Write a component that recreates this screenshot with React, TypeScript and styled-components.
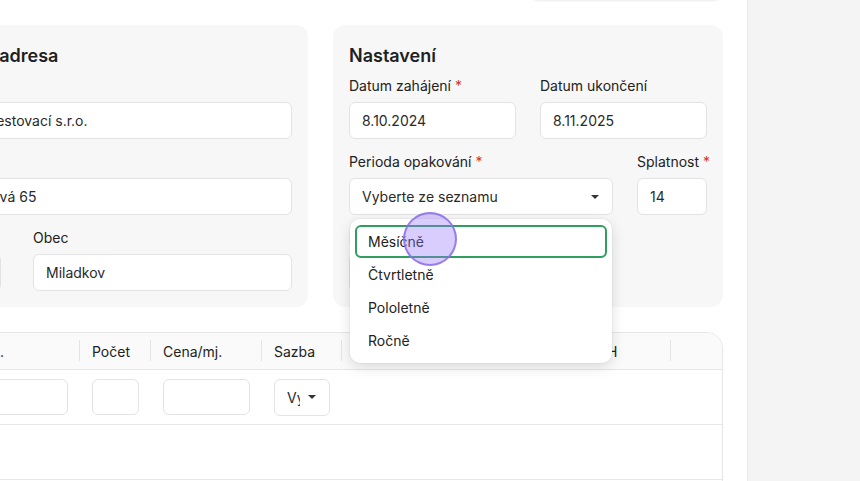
import React from "react";
import styled, { createGlobalStyle } from "styled-components";

const Global = createGlobalStyle`
  html, body { margin: 0; padding: 0; background: #ffffff; }
  body {
    font-family: Inter, "Noto Sans", "Liberation Sans", sans-serif;
    color: #222222;
    -webkit-font-smoothing: antialiased;
  }
  * { box-sizing: border-box; }
`;

const Shell = styled.div`
  display: flex;
  width: 100vw;
  height: 100vh;
  overflow: hidden;
`;

const Main = styled.main`
  flex: 1;
  min-width: 0;
  padding-right: 24px;
  display: flex;
  flex-direction: column;
`;

const Content = styled.div`
  margin-left: -82px;
  display: flex;
  flex-direction: column;
  gap: 25px;
`;

const Toolbar = styled.div`
  margin-top: -40px;
  height: 40px;
  display: flex;
  justify-content: flex-end;
`;

const ToolButton = styled.button`
  width: 192px;
  height: 40px;
  margin-right: 1px;
  background: #ffffff;
  border: 1px solid #e6e6e6;
  border-radius: 8px;
  box-shadow: 0 1px 2px rgba(0, 0, 0, 0.08);
  font: 500 14px Inter, sans-serif;
  color: #222;
`;

const Sidebar = styled.aside`
  width: 113px;
  flex-shrink: 0;
  background: #f4f4f4;
  border-left: 1px solid #ebebeb;
`;

const Cards = styled.div`
  display: grid;
  grid-template-columns: 1fr 1fr;
  gap: 25px;
`;

const Card = styled.section`
  background: #f7f7f7;
  border-radius: 12px;
  padding: 19px 16px 16px;
  display: flex;
  flex-direction: column;
`;

const CardTitle = styled.h2`
  margin: 0 0 8px;
  font-size: 18px;
  line-height: 24px;
  font-weight: 600;
  color: #1f1f1f;
  white-space: nowrap;
`;

const Row = styled.div<{ $cols: string; $gap?: number }>`
  display: grid;
  grid-template-columns: ${(p) => p.$cols};
  column-gap: ${(p) => p.$gap ?? 24}px;
  & + & {
    margin-top: 13px;
  }
`;

const Field = styled.div`
  display: flex;
  flex-direction: column;
  min-width: 0;
  position: relative;
`;

const Label = styled.label`
  font-size: 14px;
  line-height: 20px;
  margin-bottom: 6px;
  color: #222;
  white-space: nowrap;
`;

const Req = styled.span`
  color: #d0392b;
`;

const TextInput = styled.input`
  height: 37px;
  width: 100%;
  border: 1px solid #e3e3e3;
  border-radius: 6px;
  background: #ffffff;
  padding: 0 12px;
  font: 400 14px Inter, sans-serif;
  color: #2a2a2a;
  outline: none;
`;

const SelectBox = styled.div<{ $h?: number }>`
  height: ${(p) => p.$h ?? 37}px;
  width: 100%;
  border: 1px solid #e3e3e3;
  border-radius: 6px;
  background: #ffffff;
  display: flex;
  align-items: center;
  gap: 8px;
  padding: 0 13px 0 12px;
  font-size: 14px;
  color: #2a2a2a;
`;

const SelectValue = styled.span`
  flex: 1;
  min-width: 0;
  overflow: hidden;
  white-space: nowrap;
`;

const Caret = styled.span`
  width: 0;
  height: 0;
  flex-shrink: 0;
  border-left: 4px solid transparent;
  border-right: 4px solid transparent;
  border-top: 4px solid #333333;
`;

const Menu = styled.div`
  position: absolute;
  top: calc(100% + 4px);
  left: 1px;
  right: 1px;
  background: #ffffff;
  border-radius: 10px;
  box-shadow: 0 4px 14px rgba(0, 0, 0, 0.13), 0 0 0 1px rgba(0, 0, 0, 0.03);
  padding: 6px 5px;
  z-index: 10;
`;

const MenuItem = styled.div<{ $active?: boolean }>`
  height: 33px;
  display: flex;
  align-items: center;
  padding: 0 11px;
  border-radius: 6px;
  border: 2px solid ${(p) => (p.$active ? "#2f9e5f" : "transparent")};
  font-size: 14px;
  color: #222;
`;

const Cursor = styled.div`
  position: absolute;
  left: 53px;
  top: -7px;
  width: 54px;
  height: 54px;
  border-radius: 50%;
  background: rgba(150, 120, 250, 0.37);
  border: 2px solid rgba(140, 110, 235, 0.85);
  pointer-events: none;
`;

const COLS = "161px 71px 111px 80px 169px 160px 1fr";

const Table = styled.div`
  border: 1px solid #e6e6e6;
  border-radius: 16px;
  overflow: hidden;
  background: #ffffff;
`;

const HeadRow = styled.div`
  display: grid;
  grid-template-columns: ${COLS};
  height: 37px;
  background: #fafafa;
  border-bottom: 1px solid #e6e6e6;
`;

const HeadCell = styled.div<{ $last?: boolean }>`
  position: relative;
  display: flex;
  align-items: center;
  padding: 0 12px;
  font-size: 14px;
  color: #222;
  white-space: nowrap;
  &::after {
    content: "";
    display: ${(p) => (p.$last ? "none" : "block")};
    position: absolute;
    right: 0;
    top: 7px;
    width: 1px;
    height: 21px;
    background: #e4e4e4;
  }
`;

const BodyRow = styled.div`
  display: grid;
  grid-template-columns: ${COLS};
  height: 55px;
  border-bottom: 1px solid #e6e6e6;
`;

const BodyCell = styled.div`
  display: flex;
  align-items: center;
  padding: 0 12px;
  min-width: 0;
`;

const CellInput = styled(TextInput)`
  height: 36px;
`;

const menuItems = ["Měsíčně", "Čtvrtletně", "Pololetně", "Ročně"];

const headers = [
  "Popis jedn.",
  "Počet",
  "Cena/mj.",
  "Sazba",
  "Cena bez DPH",
  "Celkem s DPH",
  "",
];

const emptyCells = [0, 1, 2, 3, 4, 5, 6];

export default function App() {
  return (
    <>
      <Global />
      <Shell>
        <Main>
          <Content>
            <Toolbar>
              <ToolButton>Uložit</ToolButton>
            </Toolbar>
            <Cards>
              <Card>
                <CardTitle>Dodací adresa</CardTitle>
                <Row $cols="1fr">
                  <Field>
                    <Label>Název</Label>
                    <TextInput readOnly value="Firma Testovací s.r.o." />
                  </Field>
                </Row>
                <Row $cols="1fr">
                  <Field>
                    <Label>Ulice</Label>
                    <TextInput readOnly value="Jabloňová 65" />
                  </Field>
                </Row>
                <Row $cols="67px 1fr" $gap={32}>
                  <Field>
                    <Label>PSČ</Label>
                    <TextInput readOnly value="39601" />
                  </Field>
                  <Field>
                    <Label>Obec</Label>
                    <TextInput readOnly value="Miladkov" />
                  </Field>
                </Row>
              </Card>
              <Card>
                <CardTitle>Nastavení</CardTitle>
                <Row $cols="1fr 1fr">
                  <Field>
                    <Label>
                      Datum zahájení <Req>*</Req>
                    </Label>
                    <TextInput readOnly value="8.10.2024" />
                  </Field>
                  <Field>
                    <Label>Datum ukončení</Label>
                    <TextInput readOnly value="8.11.2025" />
                  </Field>
                </Row>
                <Row $cols="1fr 70px">
                  <Field>
                    <Label>
                      Perioda opakování <Req>*</Req>
                    </Label>
                    <SelectBox>
                      <SelectValue>Vyberte ze seznamu</SelectValue>
                      <Caret />
                    </SelectBox>
                    <Menu>
                      {menuItems.map((m, i) => (
                        <MenuItem key={m} $active={i === 0}>
                          {m}
                        </MenuItem>
                      ))}
                      <Cursor />
                    </Menu>
                  </Field>
                  <Field>
                    <Label>
                      Splatnost <Req>*</Req>
                    </Label>
                    <TextInput readOnly value="14" />
                  </Field>
                </Row>
                <Row $cols="1fr 1fr">
                  <Field>
                    <Label>Den vystavení</Label>
                    <TextInput readOnly value="" />
                  </Field>
                </Row>
              </Card>
            </Cards>
            <Table>
              <HeadRow>
                {headers.map((h, i) => (
                  <HeadCell key={i} $last={i === headers.length - 1}>
                    {h}
                  </HeadCell>
                ))}
              </HeadRow>
              <BodyRow>
                <BodyCell>
                  <CellInput readOnly value="" />
                </BodyCell>
                <BodyCell>
                  <CellInput readOnly value="" />
                </BodyCell>
                <BodyCell>
                  <CellInput readOnly value="" />
                </BodyCell>
                <BodyCell>
                  <SelectBox $h={37}>
                    <SelectValue>Vyberte</SelectValue>
                    <Caret />
                  </SelectBox>
                </BodyCell>
                <BodyCell />
                <BodyCell />
                <BodyCell />
              </BodyRow>
              {[0, 1].map((r) => (
                <BodyRow key={r}>
                  {emptyCells.map((c) => (
                    <BodyCell key={c} />
                  ))}
                </BodyRow>
              ))}
            </Table>
          </Content>
        </Main>
        <Sidebar />
      </Shell>
    </>
  );
}
